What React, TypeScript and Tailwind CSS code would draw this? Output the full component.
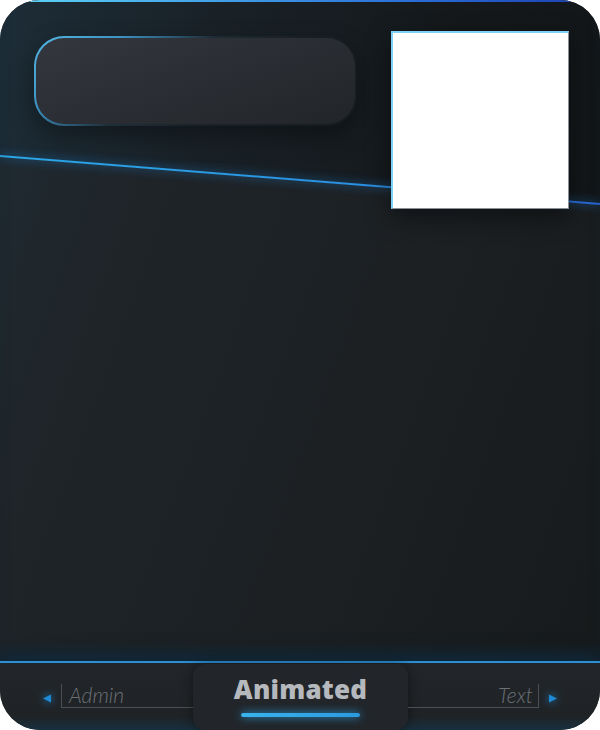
import React from 'react';

function Arrow({ dir }: { dir: 'left' | 'right' }) {
  return (
    <svg width="9" height="9" viewBox="0 0 9 9" className="drop-shadow-[0_0_4px_#1f8fe0]">
      {dir === 'left' ? <path d="M0 4.5 L8 0.5 L8 8.5 Z" fill="#1f8ad8" /> : <path d="M9 4.5 L1 0.5 L1 8.5 Z" fill="#1f8ad8" />}
    </svg>
  );
}

export default function App() {
  return (
    <main className="w-[600px] h-[730px] bg-white">
      <div className="relative w-[600px] h-[730px] rounded-[40px] overflow-hidden flex flex-col bg-[linear-gradient(110deg,#1f2c34_0%,#1f2428_25%,#1c2023_60%,#171a1b_100%)]">
        {/* top glow edge */}
        <div className="absolute top-0 left-[30px] right-[30px] h-[2px] bg-[linear-gradient(90deg,#5ad0f5,#2b6fd8_70%,#1d45b5)] z-20" />

        {/* darker header band behind the diagonal */}
        <div className="absolute inset-x-0 top-0 h-[206px] [clip-path:polygon(0_0,100%_0,100%_203px,0_155px)] bg-[linear-gradient(100deg,#1d2d37_0%,#192127_35%,#15191c_70%,#131618_100%)]" />
        {/* diagonal line */}
        <div className="absolute left-0 top-[155px] w-[602px] h-[2px] origin-top-left rotate-[4.57deg] bg-[linear-gradient(90deg,#2aa8e8,#2a90e2_60%,#2a66d4)] shadow-[0_0_10px_#1d7fd0]" />

        {/* header content */}
        <section className="relative z-10 h-[661px] flex items-start gap-[34px] pl-[34px] pt-[31px] shadow-[inset_0_-18px_20px_-12px_#0f2433]">
          <div className="mt-[5px] w-[323px] h-[90px] rounded-[30px] p-[2px] bg-[linear-gradient(140deg,#55b8e4_0%,#3d94c4_20%,rgba(40,60,75,0.35)_42%,rgba(40,44,50,0)_65%)] shadow-[0_10px_24px_rgba(0,0,0,0.35)]">
            <div className="w-full h-full rounded-[28px] bg-[linear-gradient(160deg,#34373e_0%,#2b2e34_45%,#222528_100%)]" />
          </div>
          <div className="w-[178px] h-[178px] bg-white border-t-2 border-l-2 border-t-[#7fd0f2] border-l-[#7fd0f2] border-r border-b border-r-[#8a9096] border-b-[#8a9096] shadow-[0_8px_24px_rgba(0,0,0,0.45)]" />
        </section>

        {/* footer */}
        <footer className="relative h-[69px] border-t-2 border-[#2b8fd6] bg-[linear-gradient(180deg,#22262a_0%,#1f2326_80%,#17303f_100%)] flex shadow-[0_-6px_14px_-4px_#13374f]">
          <div className="w-[193px] flex items-start pt-[31px] pl-[43px]">
            <Arrow dir="left" />
            <div className="ml-[9px] -mt-[10px] flex-1 h-[24px] border-l border-b border-[#4c5054] pl-[7px]">
              <span className="block -mt-[1px] text-[21px] leading-[24px] font-light italic text-[#6c7076] [font-family:Lato,sans-serif]">
                Admin
              </span>
            </div>
          </div>

          <div className="w-[215px] h-[66px] mt-[1px] rounded-xl bg-[#22262a] shadow-[0_0_12px_rgba(0,0,0,0.45)] flex flex-col items-center pt-[10px]">
            <span className="text-[26px] leading-[30px] font-extrabold text-[#b5b9bd] tracking-[0.2px] [font-family:'Open_Sans',sans-serif]">
              Animated
            </span>
            <div className="mt-[9px] w-[119px] h-[4px] rounded-full bg-[linear-gradient(90deg,#39b4ec,#2b9ae0)] shadow-[0_0_8px_#2aa0e8]" />
          </div>

          <div className="w-[192px] flex items-start justify-end pt-[31px] pr-[43px]">
            <div className="mr-[9px] -mt-[10px] flex-1 h-[24px] border-r border-b border-[#4c5054] pr-[5px] text-right">
              <span className="block -mt-[1px] text-[21px] leading-[24px] font-light italic text-[#6c7076] [font-family:Lato,sans-serif]">
                Text
              </span>
            </div>
            <Arrow dir="right" />
          </div>
        </footer>
      </div>
    </main>
  );
}
